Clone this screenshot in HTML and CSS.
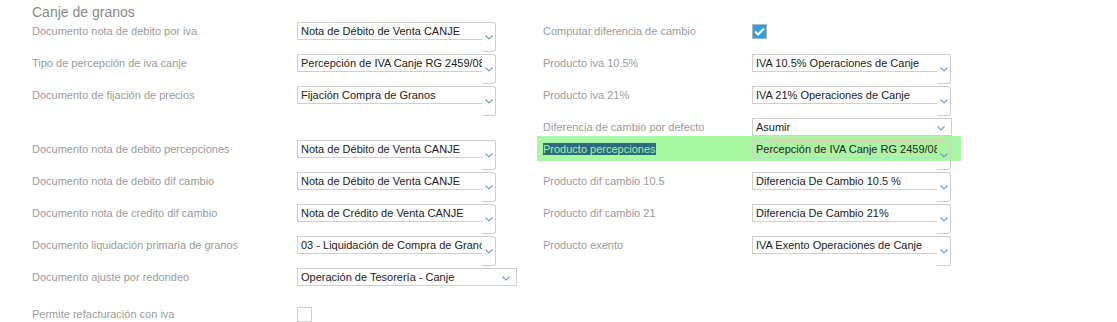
FILE: index.html
```html
<!DOCTYPE html>
<html lang="es">
<head>
    <meta charset="UTF-8">
    <meta name="viewport" content="width=device-width, initial-scale=1.0">
    <title>Canje de granos</title>
    <link rel="stylesheet" href="styles.css">
</head>
<body>
    <h2 class="titulo">Canje de granos</h2>

    <div class="columnas">
        <div class="columna columna-izq">
            <div class="fila">
                <label>Documento nota de debito por iva</label>
                <div class="combo">
                    <div class="combo-texto">Nota de Débito de Venta CANJE</div>
                    <div class="combo-btn"><svg width="8" height="5" viewBox="0 0 8 5"><polyline points="0.5,0.5 4,4 7.5,0.5"/></svg></div>
                </div>
            </div>
            <div class="fila">
                <label>Tipo de percepción de iva canje</label>
                <div class="combo">
                    <div class="combo-texto">Percepción de IVA Canje RG 2459/08</div>
                    <div class="combo-btn"><svg width="8" height="5" viewBox="0 0 8 5"><polyline points="0.5,0.5 4,4 7.5,0.5"/></svg></div>
                </div>
            </div>
            <div class="fila">
                <label>Documento de fijación de precios</label>
                <div class="combo">
                    <div class="combo-texto">Fijación Compra de Granos</div>
                    <div class="combo-btn"><svg width="8" height="5" viewBox="0 0 8 5"><polyline points="0.5,0.5 4,4 7.5,0.5"/></svg></div>
                </div>
            </div>
            <div class="espaciador"></div>
            <div class="fila">
                <label>Documento nota de debito percepciones</label>
                <div class="combo">
                    <div class="combo-texto">Nota de Débito de Venta CANJE</div>
                    <div class="combo-btn"><svg width="8" height="5" viewBox="0 0 8 5"><polyline points="0.5,0.5 4,4 7.5,0.5"/></svg></div>
                </div>
            </div>
            <div class="fila">
                <label>Documento nota de debito dif cambio</label>
                <div class="combo">
                    <div class="combo-texto">Nota de Débito de Venta CANJE</div>
                    <div class="combo-btn"><svg width="8" height="5" viewBox="0 0 8 5"><polyline points="0.5,0.5 4,4 7.5,0.5"/></svg></div>
                </div>
            </div>
            <div class="fila">
                <label>Documento nota de credito dif cambio</label>
                <div class="combo">
                    <div class="combo-texto">Nota de Crédito de Venta CANJE</div>
                    <div class="combo-btn"><svg width="8" height="5" viewBox="0 0 8 5"><polyline points="0.5,0.5 4,4 7.5,0.5"/></svg></div>
                </div>
            </div>
            <div class="fila">
                <label>Documento liquidación primaria de granos</label>
                <div class="combo">
                    <div class="combo-texto">03 - Liquidación de Compra de Granos</div>
                    <div class="combo-btn"><svg width="8" height="5" viewBox="0 0 8 5"><polyline points="0.5,0.5 4,4 7.5,0.5"/></svg></div>
                </div>
            </div>
            <div class="fila">
                <label>Documento ajuste por redondeo</label>
                <div class="selector selector-ancho">
                    <span>Operación de Tesorería - Canje</span>
                    <svg width="8" height="5" viewBox="0 0 8 5"><polyline points="0.5,0.5 4,4 7.5,0.5"/></svg>
                </div>
            </div>
            <div class="fila fila-check abajo">
                <label>Permite refacturación con iva</label>
                <span class="check"></span>
            </div>
        </div>

        <div class="columna columna-der">
            <div class="fila fila-check">
                <label>Computar diferencia de cambio</label>
                <span class="check marcado"><svg width="11" height="9" viewBox="0 0 11 9"><polyline points="1,4.5 4,7.5 10,1.5"/></svg></span>
            </div>
            <div class="fila">
                <label>Producto iva 10.5%</label>
                <div class="combo">
                    <div class="combo-texto">IVA 10.5% Operaciones de Canje</div>
                    <div class="combo-btn"><svg width="8" height="5" viewBox="0 0 8 5"><polyline points="0.5,0.5 4,4 7.5,0.5"/></svg></div>
                </div>
            </div>
            <div class="fila">
                <label>Producto iva 21%</label>
                <div class="combo">
                    <div class="combo-texto">IVA 21% Operaciones de Canje</div>
                    <div class="combo-btn"><svg width="8" height="5" viewBox="0 0 8 5"><polyline points="0.5,0.5 4,4 7.5,0.5"/></svg></div>
                </div>
            </div>
            <div class="fila fila-corta">
                <label>Diferencia de cambio por defecto</label>
                <div class="selector">
                    <span>Asumir</span>
                    <svg width="8" height="5" viewBox="0 0 8 5"><polyline points="0.5,0.5 4,4 7.5,0.5"/></svg>
                </div>
            </div>
            <div class="fila resaltada">
                <label><span class="seleccion">Producto percepciones</span></label>
                <div class="combo">
                    <div class="combo-texto">Percepción de IVA Canje RG 2459/08</div>
                    <div class="combo-btn"><svg width="8" height="5" viewBox="0 0 8 5"><polyline points="0.5,0.5 4,4 7.5,0.5"/></svg></div>
                </div>
            </div>
            <div class="fila">
                <label>Producto dif cambio 10.5</label>
                <div class="combo">
                    <div class="combo-texto">Diferencia De Cambio 10.5 %</div>
                    <div class="combo-btn"><svg width="8" height="5" viewBox="0 0 8 5"><polyline points="0.5,0.5 4,4 7.5,0.5"/></svg></div>
                </div>
            </div>
            <div class="fila">
                <label>Producto dif cambio 21</label>
                <div class="combo">
                    <div class="combo-texto">Diferencia De Cambio 21%</div>
                    <div class="combo-btn"><svg width="8" height="5" viewBox="0 0 8 5"><polyline points="0.5,0.5 4,4 7.5,0.5"/></svg></div>
                </div>
            </div>
            <div class="fila">
                <label>Producto exento</label>
                <div class="combo">
                    <div class="combo-texto">IVA Exento Operaciones de Canje</div>
                    <div class="combo-btn"><svg width="8" height="5" viewBox="0 0 8 5"><polyline points="0.5,0.5 4,4 7.5,0.5"/></svg></div>
                </div>
            </div>
        </div>
    </div>
</body>
</html>
```

FILE: styles.css
```css
body {
    font-family: "Liberation Sans", Arial, sans-serif;
    margin: 0;
    padding: 0 0 0 32px;
    background: #fff;
}
.titulo {
    margin: 2px 0 0;
    font-size: 14px;
    font-weight: normal;
    line-height: 20px;
    color: #8a8a8a;
}
.columnas {
    display: flex;
}
.columna {
    display: flex;
    flex-direction: column;
}
.columna-izq {
    width: 511px;
}
.fila {
    display: flex;
    align-items: flex-start;
    height: 32px;
    flex-shrink: 0;
}
.fila label {
    font-size: 11px;
    line-height: 18px;
    color: #9b9b9b;
    white-space: nowrap;
}
.columna-izq .fila label {
    width: 265px;
}
.columna-der .fila label {
    width: 209px;
}
.espaciador {
    height: 22px;
}
.fila-corta {
    height: 18px;
}
.fila-check {
    padding-top: 2px;
    height: 32px;
    box-sizing: border-box;
}
.fila-check label {
    line-height: 15px;
}
.fila-check.abajo {
    padding-top: 7px;
}

/* combo con boton desplegable */
.combo {
    display: flex;
    width: 200px;
}
.combo-texto {
    width: 185px;
    height: 18px;
    box-sizing: border-box;
    border: 1px solid #cfcfcf;
    border-right: none;
    padding-left: 3px;
    font-size: 11px;
    line-height: 16px;
    color: #222;
    white-space: nowrap;
    overflow: hidden;
}
.combo-btn {
    width: 14px;
    height: 30px;
    box-sizing: border-box;
    border: 1px solid #cfcfcf;
    border-left: none;
    border-radius: 0 3px 3px 0;
    padding: 12px 0 0 3px;
}
.combo-btn svg,
.selector svg {
    display: block;
    fill: none;
    stroke: #6aa3da;
    stroke-width: 1.2;
}

.selector {
    display: flex;
    align-items: center;
    justify-content: space-between;
    width: 200px;
    height: 18px;
    box-sizing: border-box;
    border: 1px solid #cfcfcf;
    padding: 0 6px 0 3px;
    font-size: 11px;
    color: #222;
}
.selector-ancho {
    width: 220px;
}
.selector svg {
    margin-top: 2px;
}

.check {
    display: inline-block;
    width: 15px;
    height: 15px;
    box-sizing: border-box;
    border: 1px solid #d0d0d0;
    background: #fff;
}
.check.marcado {
    background: #2f9fe2;
    border-color: #b5b5b5;
    padding: 2px 0 0 1px;
}
.check.marcado svg {
    display: block;
    fill: none;
    stroke: #fff;
    stroke-width: 2;
}

.resaltada {
    height: 36px;
    box-sizing: border-box;
    margin-left: -6px;
    padding: 4px 9px 0 6px;
    width: 424px;
    background: linear-gradient(#a8f7a2, #a8f7a2) no-repeat;
    background-size: 100% 25px;
}
.seleccion {
    background: #2b6b7d;
    color: #a9eeb8;
}
```
